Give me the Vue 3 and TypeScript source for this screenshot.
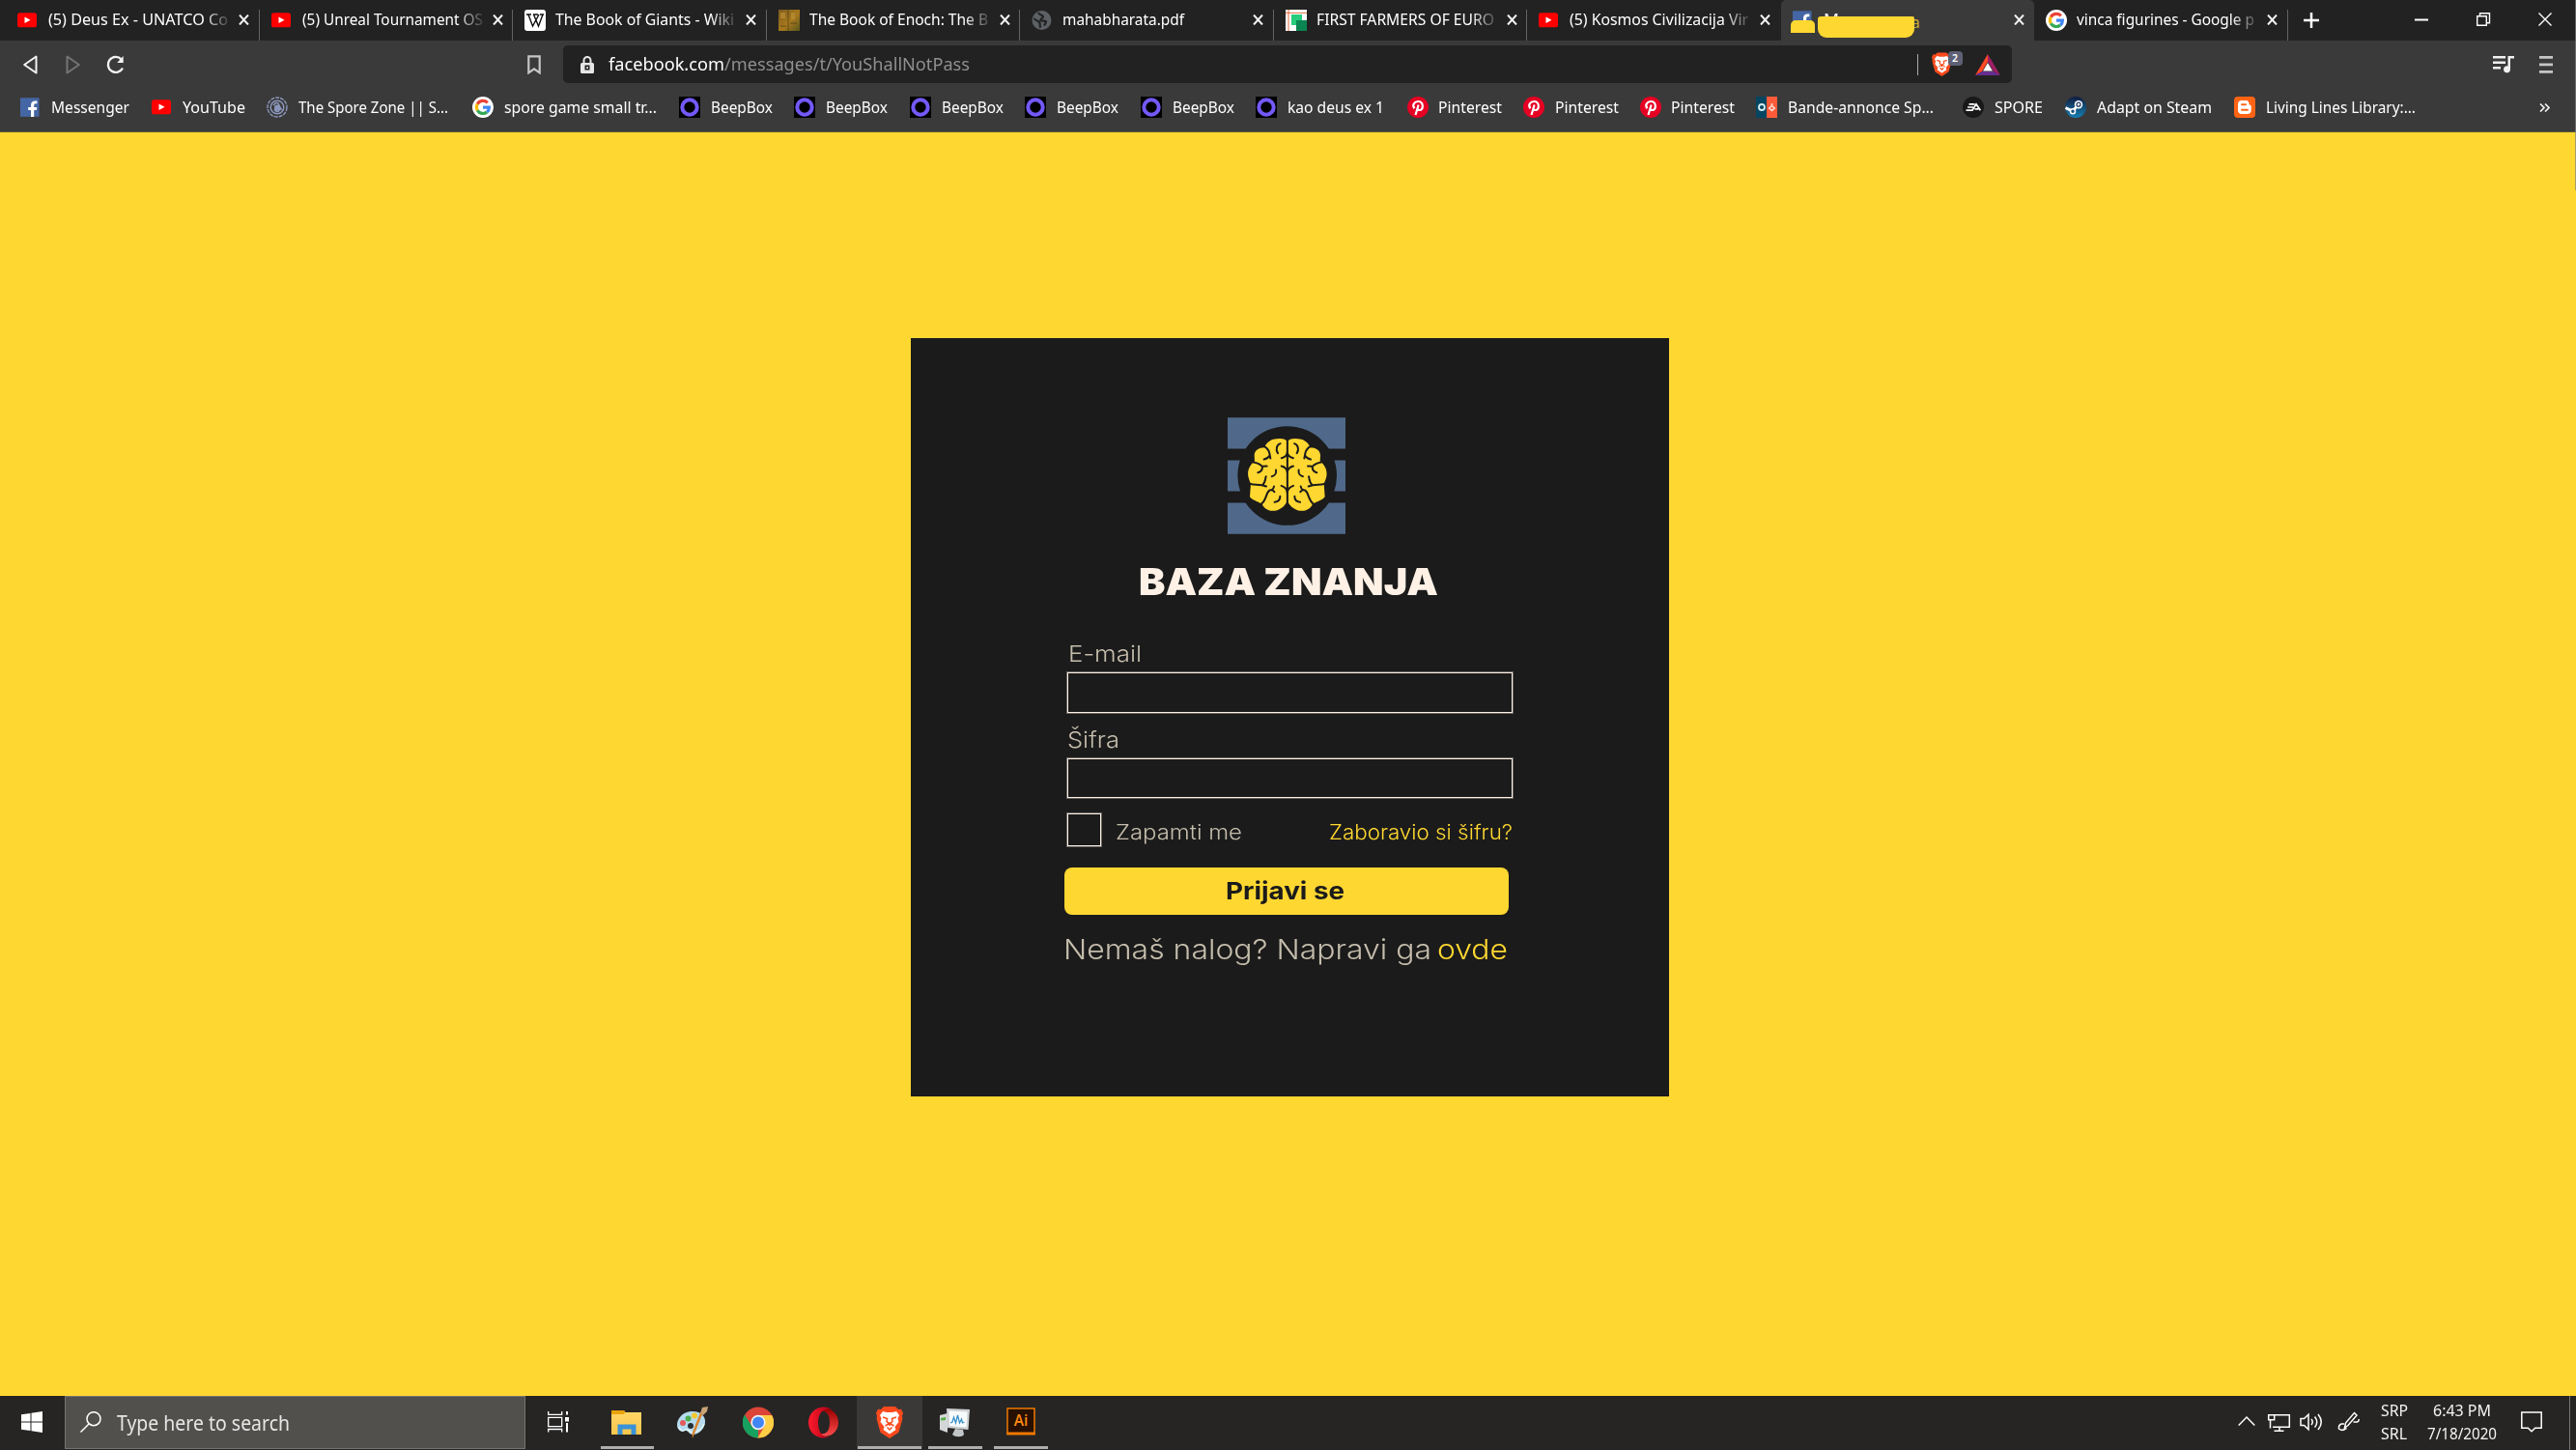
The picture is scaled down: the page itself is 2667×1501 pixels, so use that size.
<script setup lang="ts">
interface Tab { icon: string; title: string; width: number; active?: boolean }
interface Bookmark { icon: string; label: string; width: number; pitch: number; gap: number }
interface App { icon: string; slot: number; bar?: number; active?: boolean }

// Squeezes or stretches a line of text so that it fills the given width.
const vFit = {
  mounted(el: HTMLElement, binding: { value: number }) {
    const natural = el.getBoundingClientRect().width
    el.style.width = `${binding.value}px`
    el.style.transform = `scaleX(${binding.value / natural})`
  },
}

const tabs: Tab[] = [
  { icon: 'youtube', title: '(5) Deus Ex - UNATCO Co', width: 186 },
  { icon: 'youtube', title: '(5) Unreal Tournament OS', width: 187 },
  { icon: 'wiki', title: 'The Book of Giants - Wiki', width: 185 },
  { icon: 'enoch', title: 'The Book of Enoch: The B', width: 185 },
  { icon: 'globe', title: 'mahabharata.pdf', width: 126 },
  { icon: 'farmers', title: 'FIRST FARMERS OF EURO', width: 184 },
  { icon: 'youtube', title: '(5) Kosmos Civilizacija Vir', width: 185 },
  { icon: 'facebook', title: 'M', width: 16, active: true },
  { icon: 'google', title: 'vinca figurines - Google p', width: 184 },
]

const bookmarks: Bookmark[] = [
  { icon: 'facebook', label: 'Messenger', width: 81, pitch: 135.5, gap: 9.5 },
  { icon: 'youtube', label: 'YouTube', width: 65, pitch: 119.5, gap: 10 },
  { icon: 'spore', label: 'The Spore Zone || S...', width: 155, pitch: 212.5, gap: 10.5 },
  { icon: 'google', label: 'spore game small tr...', width: 158, pitch: 214, gap: 11 },
  { icon: 'beep', label: 'BeepBox', width: 64, pitch: 119.5, gap: 11 },
  { icon: 'beep', label: 'BeepBox', width: 64, pitch: 119.5, gap: 11 },
  { icon: 'beep', label: 'BeepBox', width: 64, pitch: 119.5, gap: 11 },
  { icon: 'beep', label: 'BeepBox', width: 64, pitch: 119.5, gap: 11 },
  { icon: 'beep', label: 'BeepBox', width: 64, pitch: 119, gap: 11 },
  { icon: 'beep', label: 'kao deus ex 1', width: 100, pitch: 157, gap: 11 },
  { icon: 'pinterest', label: 'Pinterest', width: 66, pitch: 120.5, gap: 10.5 },
  { icon: 'pinterest', label: 'Pinterest', width: 66, pitch: 120.5, gap: 10.5 },
  { icon: 'pinterest', label: 'Pinterest', width: 66, pitch: 120.5, gap: 10.5 },
  { icon: 'bande', label: 'Bande-annonce Sp...', width: 151, pitch: 214, gap: 11 },
  { icon: 'ea', label: 'SPORE', width: 50, pitch: 106, gap: 11 },
  { icon: 'steam', label: 'Adapt on Steam', width: 119, pitch: 175, gap: 10.5 },
  { icon: 'blogger', label: 'Living Lines Library:...', width: 155, pitch: 200, gap: 11 },
]

const apps: App[] = [
  { icon: 'folder', slot: 68, bar: 55 },
  { icon: 'paint', slot: 68 },
  { icon: 'chrome', slot: 68 },
  { icon: 'opera', slot: 68 },
  { icon: 'brave', slot: 68, bar: 66, active: true },
  { icon: 'monitor', slot: 68, bar: 56 },
  { icon: 'illustrator', slot: 68, bar: 56 },
]
</script>

<template>
  <div class="screen">
    <svg class="defs" aria-hidden="true">
      <defs>
        <linearGradient id="g-steam" x1="0" y1="0" x2="0" y2="1"><stop offset="0" stop-color="#101c40" /><stop offset="1" stop-color="#167fb4" /></linearGradient>
        <linearGradient id="g-folder" x1="0" y1="0" x2="0" y2="1"><stop offset="0" stop-color="#ffd768" /><stop offset="1" stop-color="#f9c64c" /></linearGradient>
        <linearGradient id="g-opera" x1="0" y1="0" x2="1" y2="0"><stop offset="0" stop-color="#ff1b2d" /><stop offset="1" stop-color="#a70014" /></linearGradient>
        <linearGradient id="g-opera2" x1="0" y1="0" x2="0" y2="1"><stop offset="0" stop-color="#9c0000" /><stop offset="1" stop-color="#ff4b4b" /></linearGradient>
        <linearGradient id="g-enoch" x1="0" y1="0" x2="1" y2="1"><stop offset="0" stop-color="#7d5a1c" /><stop offset=".55" stop-color="#a8791d" /><stop offset="1" stop-color="#59561d" /></linearGradient>
      </defs>
      <symbol id="youtube" viewBox="0 0 22 22"><rect x="0" y="3.3" width="20" height="15" rx="2.6" fill="#f00" /><path d="M7.5 7.5v6.6l6-3.3z" fill="#fff" /></symbol>
      <symbol id="facebook" viewBox="0 0 22 22"><rect x="0" y="1.3" width="19.5" height="19.5" fill="#4566a4" /><path d="M11 21v-7H8.200v-3H11V8.800C11 6 12.500 4.400 15.200 4.400h2.200v2.900h-1.500c-1.400 0-1.700.7-1.700 1.700v2h3.100l-.5 3h-2.600v7z" fill="#fff" /></symbol>
      <symbol id="wiki" viewBox="0 0 22 22"><rect width="22" height="22" rx="3" fill="#fff" /><path d="M2 5h5M9 5h5M16 5h4M4 5l4.500 12L15 5M9.500 5l5 12L19 5" fill="none" stroke="#111" stroke-width="1.400" /></symbol>
      <symbol id="enoch" viewBox="0 0 22 22"><rect width="22" height="22" fill="url(#g-enoch)" /><path d="M2 3h5v6H2zM13 3h4v7h-4z" fill="#b98f35" opacity=".7" /><path d="M10 0v22M12 14h7M2 17h6" stroke="#4a3a12" stroke-width="1" opacity=".7" /></symbol>
      <symbol id="globe" viewBox="0 0 22 22"><circle cx="10.500" cy="11" r="10" fill="#5d6166" /><path d="M2.500 9c2 3 5 2 6 4.500.5 2-.5 3 1 5M7 3c1 3 5 2 5 4.500-1 2-3 1.500-2.500 3.500 1.500 1.500 4-.5 5.500 1.500 0 2-1.500 2.500-2 4" fill="none" stroke="#222" stroke-width="2.200" /></symbol>
      <symbol id="farmers" viewBox="0 0 22 22"><rect width="22" height="22" fill="#fff" /><path d="M3 0v22M0 3.300h22" stroke="#e2683b" stroke-width="1" /><rect x="6" y="5" width="11" height="11" fill="#26cc7c" /><rect x="11" y="11" width="11" height="11" fill="#0b8552" /></symbol>
      <symbol id="google" viewBox="0 0 22 22"><circle cx="11" cy="11" r="11" fill="#fff" /><g fill="none" stroke-width="3.200"><path d="M15.800 6.300A6.600 6.600 0 0 0 5.300 7.800" stroke="#ea4335" /><path d="M5.300 7.800a6.600 6.600 0 0 0 0 6.400" stroke="#fbbc05" /><path d="M5.300 14.200a6.600 6.600 0 0 0 9.900 1.800" stroke="#34a853" /><path d="M15.200 16a6.500 6.500 0 0 0 2.200-4.800H11" stroke="#4285f4" /></g></symbol>
      <symbol id="spore" viewBox="0 0 22 22"><g fill="none" stroke="#8c97bd"><circle cx="11" cy="11" r="10" stroke-width="1.400" stroke-dasharray="4 1" /><circle cx="11" cy="11" r="6.800" stroke-width="1.500" /><path d="M7 9q4-5 6 0t3 4M8 13q3 5 6 0" stroke-width="1.600" /></g><circle cx="11" cy="11.500" r="3" fill="#8c97bd" /></symbol>
      <symbol id="beep" viewBox="0 0 22 22"><rect width="22" height="22" fill="#000" /><circle cx="11" cy="11" r="7.700" fill="none" stroke="#7459fa" stroke-width="4" /></symbol>
      <symbol id="pinterest" viewBox="0 0 22 22"><circle cx="11" cy="11" r="11" fill="#e60023" /><path d="M7.500 12.300C4.500 8.500 7.500 5 11.200 5c6 0 5.800 9 1.600 9-1.300 0-2-.8-2-.8M11.600 8.500L8.500 19" fill="none" stroke="#fff" stroke-width="2.200" /></symbol>
      <symbol id="bande" viewBox="0 0 22 22"><rect width="11" height="22" fill="#064663" /><rect x="11" width="11" height="22" fill="#ff5a3a" /><circle cx="6" cy="11" r="3" fill="none" stroke="#d7edf3" stroke-width="1.800" /><path d="M16.500 7v3M16.500 9.500l2.800 2.500-2.800 2.500-2.800-2.500z" fill="none" stroke="#ffe3da" stroke-width="1.500" /></symbol>
      <symbol id="ea" viewBox="0 0 22 22"><circle cx="11" cy="11" r="11" fill="#191919" /><path d="M6.500 7.800h6M5 11h6M3.500 14.200H10l4-6.400 4.400 6.400M12.500 12.800h4" fill="none" stroke="#fff" stroke-width="1.700" /></symbol>
      <symbol id="steam" viewBox="0 0 22 22"><circle cx="11" cy="11" r="11" fill="url(#g-steam)" /><path d="M.5 11.500l7 3.500 5-5" stroke="#fff" stroke-width="3" fill="none" /><circle cx="14" cy="8.200" r="4.200" fill="#fff" /><circle cx="14" cy="8.200" r="2" fill="#fff" stroke="#1c3560" stroke-width="1.200" /><circle cx="8" cy="15.300" r="2.500" fill="#1c4c7c" stroke="#fff" stroke-width="1.500" /></symbol>
      <symbol id="blogger" viewBox="0 0 22 22"><rect width="22" height="22" rx="4" fill="#ff6415" /><path d="M8 4h4c3 0 3.500 2 3.700 4.500 2 0 2 .8 2 2.500v3c0 2.500-1.500 4-4 4H8c-2.500 0-4-1.500-4-4V8c0-2.500 1.500-4 4-4z" fill="#fff" /><path d="M8 8.300h4M8 13.700h6" stroke="#ff6415" stroke-width="2" stroke-linecap="round" /></symbol>
      <symbol id="brave" viewBox="0 0 28 33"><path d="M8 0h12l3 3 3-.2 2 4-1 3 .4 3-4 14L14 33 4.500 26.800.6 12.800l.4-3-1-3 2-4L5 3z" fill="#fb4a1d" /><path d="M7 5l4 1h6l4-1 3 4-1.500 3.500 1 3.500-4 5 1 3L14 28.500 7.500 24l1-3-4-5 1-3.500L4 9z" fill="#fff" /><path d="M7 11l4.500 1.500L11 15l2 3-3.500 2M21 11l-4.500 1.500.5 2.500-2 3 3.500 2M14 16v4M11.500 21.500L14 24l2.500-2.500" fill="none" stroke="#fb4a1d" stroke-width="1.500" /></symbol>
      <symbol id="folder" viewBox="0 0 32 33"><path d="M0 4h13l1.500 2H31v23H0z" fill="url(#g-folder)" /><path d="M0 4h13l1.500 2-2 2H0z" fill="#e8a30d" /><path d="M6.500 18.500h19V29h-5v-5.500h-9V29h-5z" fill="#3a92d6" /></symbol>
      <symbol id="paint" viewBox="0 0 32 33"><path d="M14 5C5 6 0 13 0 19c0 5 4 8 8 6 3-1 4 4 8 4 7 0 12-6 13-12S25 4 14 5z" fill="#b5dcee" /><path d="M2 21c1 4 4 5 7 3s4 4 8 3 9-4 11-9" fill="none" stroke="#e4f5fc" stroke-width="1.500" /><circle cx="6" cy="17" r="3" fill="#e25a5c" /><circle cx="11.500" cy="12.500" r="3" fill="#4bad4d" /><circle cx="18" cy="9.500" r="3" fill="#f4c72e" /><circle cx="14" cy="20" r="3" fill="#252c34" /><path d="M27 6L18 28l-2 5-.5-5L24 6z" fill="#d98430" /><path d="M24 7l2-6 6-1-1 5-4 4z" fill="#caa376" /></symbol>
      <symbol id="chrome" viewBox="0 0 32 33"><circle cx="16" cy="16.500" r="16" fill="#db4437" /><path d="M2 8.500l7.500 12L16 24v8.500A16 16 0 0 1 2 8.500z" fill="#16a15f" /><path d="M16 9h14.200a16 16 0 0 1-14.700 23.500L23 19.500z" fill="#ffce44" /><circle cx="16" cy="16.500" r="7.700" fill="#f1f1f1" /><circle cx="16" cy="16.500" r="6" fill="#4285f4" /></symbol>
      <symbol id="opera" viewBox="0 0 32 33"><path d="M10 27c7 8 21 2 21-10.500S17-2 10 6c8-4 12 2 12 10.500S18 31 10 27z" fill="url(#g-opera2)" /><path fill-rule="evenodd" d="M16 .5C7 .5 0 7.500 0 16.500s7 16 16 16c3 0 6-1 8-2.500-9 5-14-4-14-13.500S16 .5 24 3C22 1.500 19 .5 16 .5z" fill="url(#g-opera)" /></symbol>
      <symbol id="monitor" viewBox="0 0 32 33"><path d="M0 9l8-2v20l-8-3z" fill="#d4d7d8" /><path d="M1 12l5-1v3l-5 .5z" fill="#51b146" /><path d="M7 2l24 1-1.500 21L8 22z" fill="#cfd2d3" /><path d="M9.500 4.500l19 1-1 16L10 20z" fill="#f8fbfc" /><path d="M11 17l2-1 1.500-5 2 6 2-8 2 8 2-4 1 4 2-1" fill="none" stroke="#308fc8" stroke-width="1.200" /><path d="M16 23l8 1 1 5c-2 3-9 3-12 0z" fill="#c3c6c8" /></symbol>
      <symbol id="illustrator" viewBox="0 0 32 33"><rect x="2" y="2" width="28" height="26" fill="#271001" stroke="#f07800" stroke-width="1.500" /><path d="M1.200 26.500h29.600V29.500H1.200z" fill="#f07800" /></symbol>
    </svg>

    <header class="browser">
      <nav class="tabs">
        <div v-for="(tab, i) in tabs" :key="i" class="tab" :class="{ active: tab.active, before: i === 6 || tab.active }">
          <svg class="ico"><use :href="'#' + tab.icon" /></svg>
          <div class="title" :class="{ fade: tab.width > 150 }"><span v-fit="tab.width" class="fit">{{ tab.title }}</span></div>
          <svg class="close" viewBox="0 0 11 11"><path d="M1 .5l9 10M10 .5l-9 10" /></svg>
          <template v-if="tab.active"><i class="blot small"></i><span class="tail">a</span><i class="blot"></i></template>
        </div>
        <svg class="plus" viewBox="0 0 16 16"><path d="M8 0v16M0 8h16" /></svg>
        <svg class="winctl" viewBox="0 0 142 14">
          <path d="M0 7.500h14" stroke-width="2" />
          <path d="M64.700 3.700h9.600v9.600h-9.600zM67.500 3.500V.700h10v10h-3" />
          <path d="M128.500.5l13 13M141.500.5l-13 13" />
        </svg>
      </nav>

      <div class="toolbar">
        <svg class="nav" viewBox="0 0 110 20" fill="none" stroke-width="2" stroke-linejoin="round">
          <path d="M13.500 1.500v17L1.200 10z" stroke="#f2f2f2" />
          <path d="M45.500 1.500v17L57.800 10z" stroke="#747474" />
          <path d="M101.600 4.300A8 8 0 1 0 103 13.500" stroke="#f2f2f2" stroke-width="2.400" /><path d="M103.700 1v7h-6.500z" fill="#f2f2f2" />
        </svg>
        <svg class="mark" viewBox="0 0 14 20"><path d="M1.300 1.300h11.400v17L7 14.300l-5.700 4z" fill="none" stroke="#c6c6c6" stroke-width="2.200" /></svg>
        <div class="address">
          <svg class="lock" viewBox="0 0 14 18"><path d="M3.500 8V4.500a3.500 3.500 0 0 1 7 0V8" fill="none" stroke="#e6e6e6" stroke-width="2" /><rect y="7" width="14" height="11" rx="1.500" fill="#e6e6e6" /><rect x="4.500" y="9.500" width="5" height="5" fill="#222" /><rect x="6.200" y="11.200" width="1.800" height="1.800" fill="#e6e6e6" /></svg>
          <span v-fit="120" class="fit host">facebook.com</span>
          <span v-fit="254" class="fit path">/messages/t/YouShallNotPass</span>
          <span class="rule"></span>
          <div class="shield"><svg viewBox="0 0 28 33"><use href="#brave" /></svg><b>2</b></div>
          <svg class="bat" viewBox="0 0 26 22"><path d="M13 0L0 22l7-4 6-10z" fill="#ff4724" /><path d="M13 0l13 22-7-4-6-10z" fill="#9e1f63" /><path d="M0 22h26l-7-4H7z" fill="#662d91" /><path d="M13 9l5 8.500H8z" fill="#fff" /></svg>
        </div>
        <svg class="music" viewBox="0 0 22 18" fill="#f0f0f0"><path d="M0 0h13v2.600H0zM0 5.500h13v2.600H0zM0 11h8v2.600H0zM15.500 0H22v2.600h-4v11.200a3.500 3.500 0 1 1-2.500-3.300z" /></svg>
        <svg class="menu" viewBox="0 0 14 18" fill="#c6c6c6"><path d="M0 0h14v2.800H0zM0 7.500h14v2.800H0zM0 15h14v2.800H0z" /></svg>
      </div>

      <div class="bookmarks">
        <div v-for="(b, i) in bookmarks" :key="i" class="bookmark" :style="{ width: b.pitch + 'px' }">
          <svg class="ico"><use :href="'#' + b.icon" /></svg>
          <span v-fit="b.width" class="fit" :style="{ marginLeft: b.gap + 'px' }">{{ b.label }}</span>
        </div>
        <svg class="more" viewBox="0 0 11 9"><path d="M1 .5l4 4-4 4M6 .5l4 4-4 4" /></svg>
      </div>
    </header>

    <main class="page">
      <section class="card">
        <svg class="logo" viewBox="363 97 366 362">
          <path d="M363 97h366v97H363zM363 230h366v96H363zM363 362h366v97H363z" fill="#50698a" />
          <circle cx="548" cy="278" r="154" fill="#1b1b1b" />
          <g v-for="side in [1, -1]" :key="side" :transform="side === 1 ? '' : 'translate(1097 0) scale(-1 1)'">
            <path fill="#ffd731" d="M547 172C544 162 525 161 505 165C491 169 480 181 478 190C460 190 446 199 446 215L447 233C431 245 424 262 427 280C430 293 434 299 435 302L432 343C437 351 455 358 470 365C475 380 490 387 503 387C522 387 540 374 547 358Z" />
            <g fill="none" stroke="#1b1b1b" stroke-width="6" stroke-linecap="round">
              <path d="M476 186C484 191 492 200 493 209L496 224M476 227Q488 225 493 216" />
              <path d="M527 178C514 182 512 198 519 208" />
              <path d="M443 236C455 238 465 243 470 249L485 248M471 250C471 260 465 266 457 268" />
              <path d="M513 260C515 270 510 278 500 280" />
              <path d="M434 303C447 308 463 303 483 311M472 306C480 299 480 288 482 280" />
              <path d="M530 223C540 221 547 215 549 206M530 248C540 250 546 256 549 266" />
              <path d="M467 366C487 350 480 330 494 323Q503 321 508 328M500 322Q506 319 507 311" />
              <path d="M526 342C526 354 518 359 509 360" />
              <path d="M530 309C540 312 547 320 549 330" />
            </g>
          </g>
          <path d="M548.500 170v215" stroke="#1b1b1b" stroke-width="6" />
        </svg>
        <h1><span v-fit="310" class="fit">BAZA ZNANJA</span></h1>
        <label class="label email"><span v-fit="76" class="fit">E-mail</span></label>
        <div class="field"></div>
        <label class="label pass"><span v-fit="54" class="fit">Šifra</span></label>
        <div class="field second"></div>
        <div class="options">
          <span class="check"></span>
          <span v-fit="131" class="fit remember">Zapamti me</span>
          <a v-fit="190" class="fit forgot">Zaboravio si šifru?</a>
        </div>
        <button class="submit"><span v-fit="123" class="fit">Prijavi se</span></button>
        <p class="signup"><span v-fit="381" class="fit">Nemaš nalog? Napravi ga</span><a v-fit="73" class="fit">ovde</a></p>
      </section>
    </main>

    <footer class="taskbar">
      <div class="start"><svg viewBox="0 0 22 22" fill="#fff"><path d="M0 3.200l9.500-1.300v8.600H0zM10.500 1.700L22 0v10.500H10.500zM0 11.500h9.500v8.600L0 18.800zM10.500 11.500H22V22l-11.500-1.700z" /></svg></div>
      <div class="search">
        <svg viewBox="0 0 22 22" fill="none" stroke="#fff" stroke-width="1.500"><circle cx="14" cy="7.700" r="7" /><path d="M9 13L.5 21.500" /></svg>
        <span v-fit="179" class="fit">Type here to search</span>
      </div>
      <svg class="taskview" viewBox="0 0 22 22"><path d="M.7 0v3.300h14V0M.7 6.300h14v9.400H.7zM.7 21.500v-3h14v3" fill="none" stroke="#fff" stroke-width="1.300" /><path d="M19 0h2v3.500h-2zM18 6h4v4.500h-4zM19 12h2v9.500h-2z" fill="#fff" /></svg>
      <div class="apps">
        <div v-for="(a, i) in apps" :key="i" class="app" :class="{ current: a.active }" :style="{ width: a.slot + 'px' }">
          <svg><use :href="'#' + a.icon" /></svg>
          <span v-if="a.icon === 'illustrator'" class="ai">Ai</span>
          <i v-if="a.bar" :style="{ width: a.bar + 'px' }"></i>
        </div>
      </div>
      <svg class="tray" viewBox="0 0 126 24" fill="none" stroke="#fff" stroke-width="1.500">
        <path d="M.7 15.500L9 7l8.300 8.500" />
        <path d="M38 4.700h15.300v12.500H36M33.500 9v9.500M43 17.500V21M37.500 21.300h10M31.700 4.700h6v5h-6z" />
        <path d="M65 8.500h3.500L73 4.200v15.500l-4.500-4.200H65zM76 9q2.500 3 0 6M79.500 6.500q4.500 5.500 0 11M83 4q6.500 8 0 16" />
        <path d="M110.500 18l1-5 9-10.500 2.500 2.500-9 10.500zM110 14h-3q-3 1-2.500 5 4 3 8-.5M119.500 12h4q2-.5 1.500-3" />
      </svg>
      <div class="lang"><span v-fit="28" class="fit">SRP</span><span v-fit="27" class="fit">SRL</span></div>
      <div class="clock"><span v-fit="60" class="fit">6:43 PM</span><span v-fit="72" class="fit">7/18/2020</span></div>
      <svg class="notice" viewBox="0 0 22 22"><path d="M.8 1h20.400v16.300h-6.500L11 20.800l-3.700-3.500H.8z" fill="none" stroke="#fff" stroke-width="1.500" /></svg>
      <span class="peek"></span>
    </footer>
    <i class="edge"></i>
  </div>
</template>

<style>
body { margin: 0; overflow: hidden; }
</style>

<style scoped>
* { box-sizing: border-box; }
.screen { position: relative; width: 2667px; height: 1501px; display: flex; flex-direction: column; background: #ffd731; font-family: "Noto Sans", "Open Sans", sans-serif; color: #fff; overflow: hidden; }
.defs { position: absolute; width: 0; height: 0; }
.fit { display: block; flex: none; width: max-content; white-space: pre; transform-origin: 0 50%; text-align: left; }
svg { display: block; flex: none; }
.browser { flex: none; height: 137px; background: #3a3a3a; border-bottom: 1px solid #5e5738; }
.ico { width: 22px; height: 22px; }
.edge { position: absolute; right: 0; top: 0; width: 1px; height: 197px; background: rgba(130, 130, 130, .7); }

.tabs { display: flex; height: 42px; background: #222; padding-left: 6px; }
.tab { position: relative; display: flex; flex: none; width: 262.5px; height: 42px; padding: 10px 0 0 12px; }
.tab::after { content: ""; width: 1px; height: 32px; background: #636363; margin-left: auto; }
.tab.before::after { background: transparent; }
.tab.active { background: #3a3a3a; border-radius: 5px 5px 0 0; }
.title { width: 188px; margin-left: 10px; font-size: 16.7px; line-height: 20px; height: 24px; }
.title.fade { mask-image: linear-gradient(90deg, #000 160px, rgba(0, 0, 0, .12) 187px); }
.close { width: 11px; height: 11px; margin: 5px 0 0 9px; fill: none; stroke: #f0f0f0; stroke-width: 2; }
.blot { position: absolute; left: 38px; top: 17px; width: 100px; height: 22px; background: #ffd731; border-radius: 3px 2px 9px 9px; }
.blot.small { left: 10px; top: 21px; width: 25px; height: 13px; border-radius: 5px 5px 0 0; }
.tail { position: absolute; left: 135px; top: 13px; font-size: 16.7px; line-height: 20px; color: #c9aa35; }
.plus { width: 16px; height: 16px; margin: 13px 0 0 16.500px; stroke: #fff; stroke-width: 2.500; }
.winctl { width: 142px; height: 14px; margin: 13px 25px 0 auto; fill: none; stroke: #fff; stroke-width: 1.400; }

.toolbar { display: flex; align-items: center; height: 49px; padding: 0 24px; }
.nav { width: 110px; height: 20px; }
.mark { width: 14px; height: 20px; margin-left: 412px; }
.address { display: flex; align-items: center; width: 1500px; height: 39px; margin-left: 23px; padding-left: 18px; background: #222; border-radius: 5px; font-size: 17.500px; }
.lock { width: 14px; height: 18px; margin-right: 15px; }
.address .fit { line-height: 39px; height: 39px; }
.path { color: #8f8f8f; }
.rule { width: 1px; height: 22px; margin-left: 980.500px; background: #aaa; }
.shield { position: relative; width: 34px; height: 25px; margin-left: 14px; }
.shield svg { width: 21px; height: 25px; }
.shield b { position: absolute; left: 17px; top: -1px; width: 15px; height: 15px; border-radius: 4px; background: #5e6175; font: 600 10.500px/15px "Noto Sans", sans-serif; text-align: center; }
.bat { width: 26px; height: 22px; margin-left: 11px; }
.music { width: 22px; height: 18px; margin-left: auto; }
.menu { width: 14px; height: 18px; margin-left: 26px; }

.bookmarks { display: flex; align-items: center; height: 42px; padding: 0 27px 0 21px; margin-top: -1px; font-size: 16px; line-height: 22px; }
.bookmark { display: flex; flex: none; align-items: center; }
.bookmark .fit { height: 23px; }
.more { width: 11px; height: 9px; margin-left: auto; fill: none; stroke: #f0f0f0; stroke-width: 1.700; }

.page { flex: 1; display: flex; padding: 213px 0 0 943px; }
.card { display: flex; flex-direction: column; align-items: flex-start; width: 785px; height: 785px; padding: 82px 0 0 162px; background: #1b1b1b; font-family: Inter, "Open Sans", sans-serif; font-weight: 300; color: #c5bdac; }
.logo { width: 122px; height: 121px; margin-left: 166px; }
h1 { margin: 29px 0 0 73.500px; font-size: 38.500px; line-height: 40px; font-weight: 900; color: #fff1e6; }
.label { font-size: 23.400px; line-height: 28px; }
.email { margin-top: 41px; margin-left: .5px; }
.pass { margin-top: 14px; }
.field { width: 461px; height: 42px; margin-top: 5px; border: 1px solid #fff1e6; box-shadow: 0 0 0 1px rgba(255, 241, 230, .35); }
.field.second { height: 41px; margin-top: 5px; }
.options { display: flex; width: 461px; height: 34px; margin-top: 16px; }
.check { width: 35px; height: 34px; border: 1px solid #fff1e6; box-shadow: 0 0 0 1px rgba(255, 241, 230, .35); }
.options .fit { font-size: 21.300px; line-height: 38px; }
.remember { margin-left: 15px; }
.options .forgot { margin-left: auto; line-height: 39px; color: #ffd731; }
.submit { width: 460px; height: 49px; margin: 22px 0 0 -3px; padding: 0 0 0 167px; border: 0; border-radius: 8px; background: #ffd731; color: #1b1b1b; font: 700 24.700px/49px Inter, sans-serif; text-align: left; }
.signup { display: flex; gap: 6px; margin: 18px 0 0 -4px; font-size: 28.500px; line-height: 36px; }
.signup a { color: #ffd731; }

.taskbar { display: flex; flex: none; align-items: flex-start; height: 56px; background: #262524; }
.start { width: 67px; padding: 16px 0 0 22px; }
.start svg { width: 22px; height: 22px; }
.search { display: flex; width: 477px; height: 55px; padding: 15px 0 0 15px; background: #52504d; border: 1px solid #757370; font-size: 22.400px; line-height: 24px; color: #e6e6e6; }
.search svg { width: 22px; height: 22px; margin-right: 16px; }
.taskview { width: 22px; height: 22px; margin: 16px 0 0 23px; }
.apps { display: flex; margin-left: 26px; }
.app { position: relative; display: flex; justify-content: center; height: 55px; padding-top: 11px; }
.app svg { width: 32px; height: 33px; }
.app.current { background: #3a3938; }
.app i { position: absolute; bottom: 0; height: 3px; background: #b0aeac; }
.ai { position: absolute; top: 15px; font: 600 15.500px/20px "Open Sans", sans-serif; color: #ff8a12; }
.tray { width: 126px; height: 24px; margin: 15px 0 0 auto; }
.lang, .clock { display: flex; flex-direction: column; font-size: 16px; line-height: 24px; padding-top: 3px; color: #f4f4f4; }
.lang { width: 28px; margin-left: 22px; }
.clock { width: 72px; margin-left: 20px; align-items: center; }
.notice { width: 22px; height: 22px; margin: 16px 0 0 25px; }
.peek { width: 7px; height: 56px; margin-left: 28px; border-left: 1px solid #777; }
</style>
